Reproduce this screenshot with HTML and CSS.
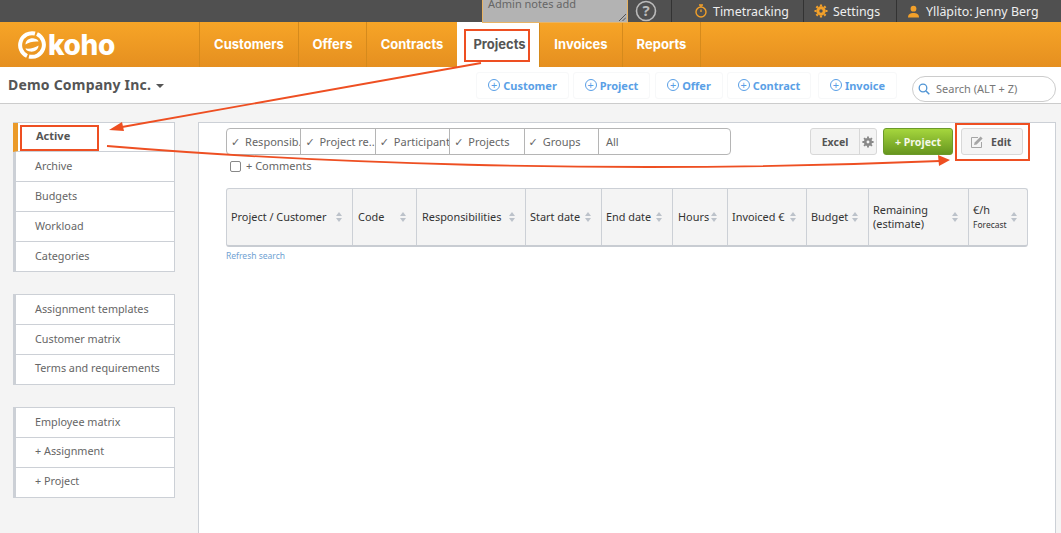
FILE: index.html
```html
<!DOCTYPE html>
<html>
    <head>
        <meta name="viewport" content="width=device-width, initial-scale=1" />
        <meta http-equiv="content-type" content="text/html; charset=utf-8" />
        <title>Koho | Projects</title>
        <link rel="stylesheet" href="styles.css">
    </head>
    <body>
        <div class="topbar">
            <div class="notes">Admin notes add<svg class="grip" width="8" height="8" viewBox="0 0 8 8"><path d="M1 8L8 1M4.500 8L8 4.500" stroke="#555" fill="none"/></svg></div>
            <div class="help"><svg width="22" height="22" viewBox="0 0 22 22"><circle cx="11" cy="11" r="9.500" fill="none" stroke="#bbb" stroke-width="1.600"/><text x="11" y="15.500" text-anchor="middle" class="help-mark">?</text></svg></div>
            <div class="top-item top-time">
                <svg width="14" height="14" viewBox="0 0 14 14"><circle cx="7" cy="8" r="5" fill="none" stroke="#f2a02a" stroke-width="1.400"/><path d="M5 1h4M7 1v2M7 5.500V8" stroke="#f2a02a" stroke-width="1.300" fill="none"/></svg>
                Timetracking
            </div>
            <div class="top-item top-settings">
                <svg width="14" height="14" viewBox="0 0 14 14"><circle cx="7" cy="7" r="3.200" fill="none" stroke="#f2a02a" stroke-width="3"/><path d="M7 0.500v2M7 11.500v2M0.500 7h2M11.500 7h2M2.400 2.400l1.400 1.400M10.200 10.200l1.400 1.400M2.400 11.600l1.400-1.400M10.200 3.800l1.400-1.400" stroke="#f2a02a" stroke-width="2.200"/></svg>
                Settings
            </div>
            <div class="top-item top-user">
                <svg width="13" height="13" viewBox="0 0 13 13"><circle cx="6.500" cy="3.700" r="2.900" fill="#f2a02a"/><path d="M1 12.500c0-3.500 2.500-4.500 5.500-4.500s5.500 1 5.500 4.500z" fill="#f2a02a"/></svg>
                Ylläpito: Jenny Berg
            </div>
        </div>

        <div class="header">
            <div class="logo">
                <svg width="28" height="28" viewBox="0 0 28 28">
                    <path d="M17 2.500A12 12 0 0 0 9 25" fill="none" stroke="#fff" stroke-width="4"/>
                    <path d="M11 25.500A12 12 0 0 0 19 3" fill="none" stroke="#fff" stroke-width="4"/>
                    <path d="M7.500 13.500C7.500 9 12 6.800 16 7.500C19 8 20.500 9.500 20.500 10.500C16 10 11 11 7.500 13.500z" fill="#fff"/>
                    <path d="M20.500 14.500C20.500 19 16 21.200 12 20.500C9 20 7.500 18.500 7.500 17.500C12 18 17 17 20.500 14.500z" fill="#fff"/>
                </svg>
                <span>koho</span>
            </div>
            <a class="nav nav-customers">Customers</a>
            <a class="nav nav-offers">Offers</a>
            <a class="nav nav-contracts">Contracts</a>
            <a class="nav nav-projects active">Projects</a>
            <a class="nav nav-invoices">Invoices</a>
            <a class="nav nav-reports">Reports</a>
        </div>

        <div class="subbar">
            <div class="company">Demo Company Inc.<span class="caret"></span></div>
            <div class="quick">
                <a class="quick-btn q-customer"><span class="plus">+</span>Customer</a>
                <a class="quick-btn q-project"><span class="plus">+</span>Project</a>
                <a class="quick-btn q-offer"><span class="plus">+</span>Offer</a>
                <a class="quick-btn q-contract"><span class="plus">+</span>Contract</a>
                <a class="quick-btn q-invoice"><span class="plus">+</span>Invoice</a>
            </div>
            <div class="search">
                <svg width="12" height="12" viewBox="0 0 12 12"><circle cx="5" cy="5" r="3.800" fill="none" stroke="#4f94d4" stroke-width="1.300"/><path d="M8 8l3.300 3.300" stroke="#4f94d4" stroke-width="1.500"/></svg>
                Search (ALT + Z)
            </div>
        </div>

        <div class="main">
            <div class="sidebar">
                <ul class="menu">
                    <li class="current">Active</li>
                    <li>Archive</li>
                    <li>Budgets</li>
                    <li>Workload</li>
                    <li>Categories</li>
                </ul>
                <ul class="menu">
                    <li>Assignment templates</li>
                    <li>Customer matrix</li>
                    <li class="row-up">Terms and requirements</li>
                </ul>
                <ul class="menu">
                    <li>Employee matrix</li>
                    <li class="row-up">+ Assignment</li>
                    <li class="row-up">+ Project</li>
                </ul>
            </div>
            <div class="panel">
                <div class="toolbar">
                    <div class="filters">
                        <div class="seg"><span class="tick">✓</span> Responsib.</div>
                        <div class="seg"><span class="tick">✓</span> Project re..</div>
                        <div class="seg"><span class="tick">✓</span> Participant</div>
                        <div class="seg"><span class="tick">✓</span> Projects</div>
                        <div class="seg"><span class="tick">✓</span> Groups</div>
                        <div class="seg seg-all">All</div>
                    </div>
                    <div class="excel">
                        <span class="excel-label">Excel</span>
                        <span class="excel-gear"><svg width="12" height="12" viewBox="0 0 14 14"><circle cx="7" cy="7" r="3.200" fill="none" stroke="#888" stroke-width="3"/><path d="M7 0.500v2M7 11.500v2M0.500 7h2M11.500 7h2M2.400 2.400l1.400 1.400M10.200 10.200l1.400 1.400M2.400 11.600l1.400-1.400M10.200 3.800l1.400-1.400" stroke="#888" stroke-width="2.200"/></svg></span>
                    </div>
                    <div class="btn-green">+ Project</div>
                    <div class="btn-edit">
                        <svg width="12" height="12" viewBox="0 0 12 12"><path d="M10.500 6v5.500H0.500V1.500H7" fill="none" stroke="#a5a5a5" stroke-width="1"/><path d="M3 9l.6-2.600L9.600 0.500l2 2-6 6z" fill="#a5a5a5"/></svg>
                        Edit
                    </div>
                </div>
                <label class="comments"><span class="check"></span>+ Comments</label>
                <table class="grid">
                    <tr>
                        <th class="c1">Project / Customer<span class="sort"></span></th>
                        <th class="c2">Code<span class="sort"></span></th>
                        <th class="c3">Responsibilities<span class="sort"></span></th>
                        <th class="c4">Start date<span class="sort"></span></th>
                        <th class="c5">End date<span class="sort"></span></th>
                        <th class="c6">Hours<span class="sort"></span></th>
                        <th class="c7">Invoiced €<span class="sort"></span></th>
                        <th class="c8">Budget<span class="sort"></span></th>
                        <th class="c9">Remaining<br>(estimate)<span class="sort"></span></th>
                        <th class="c10">€/h<br><small>Forecast</small><span class="sort"></span></th>
                    </tr>
                </table>
                <a class="refresh">Refresh search</a>
            </div>
        </div>

        <!-- annotations drawn over the screenshot -->
        <div class="mark mark-projects"></div>
        <div class="mark mark-active"></div>
        <div class="mark mark-edit"></div>
        <svg class="arrows" width="1061" height="533" viewBox="0 0 1061 533">
            <path d="M481 63L122 127" stroke="#ee4f22" stroke-width="1.800" fill="none"/>
            <path d="M109 130L122 122L124 131z" fill="#ee4f22"/>
            <path d="M107 146C300 162 600 175 940 161" stroke="#ee4f22" stroke-width="1.800" fill="none"/>
            <path d="M950 160L938 155L939 166z" fill="#ee4f22"/>
        </svg>
    </body>
</html>
```

FILE: styles.css
```css
*{
    box-sizing: border-box;
    padding: 0;
    margin: 0;
}
html, body{
    height: 533px;
    overflow: hidden;
}
body{
    background: #f4f4f4;
    color: #555;
    font-family: "Noto Sans", "Open Sans", sans-serif;
    font-size: 11px;
    position: relative;
}
svg{
    display: block;
    flex: none;
}

/* top bar */
.topbar{
    height: 22px;
    background: #505050;
    display: flex;
    align-items: center;
    color: #eee;
    font-size: 12.400px;
    padding-left: 482px;
}
.notes{
    width: 146px;
    height: 23px;
    align-self: flex-start;
    background: #b3b3b3;
    border: 1px solid #e8b465;
    border-top: none;
    color: #666;
    font-size: 11px;
    line-height: 8px;
    padding-left: 5px;
    position: relative;
    z-index: 2;
}
.grip{
    position: absolute;
    right: 1px;
    bottom: 1px;
}
.help{
    width: 43px;
    padding-left: 7px;
}
.help-mark{
    font-family: "Noto Sans", sans-serif;
    font-size: 15px;
    font-weight: 700;
    fill: #bbb;
}
.top-item{
    height: 22px;
    display: flex;
    align-items: center;
    gap: 5px;
    border-left: 1px solid #333;
}
.top-time{
    width: 132px;
    padding-left: 22px;
}
.top-settings{
    width: 93px;
    padding-left: 10px;
}
.top-user{
    padding-left: 10px;
    gap: 6px;
}

/* orange header */
.header{
    height: 45px;
    background: linear-gradient(#f7a527, #e58f20);
    display: flex;
    font-family: Inter, "Noto Sans", sans-serif;
    font-size: 13px;
    font-weight: 700;
    color: #fff;
}
.logo{
    width: 199px;
    display: flex;
    align-items: center;
    gap: 2px;
    padding-left: 18px;
    font-size: 28px;
    font-weight: 800;
    letter-spacing: -0.400px;
}
.nav{
    border-left: 1px solid #d58a1c;
    line-height: 45px;
    text-align: center;
}
.nav-customers{ width: 99px; }
.nav-offers{ width: 68px; }
.nav-contracts{ width: 91px; }
.nav-projects{ width: 82px; }
.nav-invoices{ width: 83px; }
.nav-reports{
    width: 79px;
    border-right: 1px solid #d58a1c;
}
.nav.active{
    background: #fff;
    color: #555;
    border-left: 3px solid #fff;
}

/* company bar */
.subbar{
    height: 37px;
    background: #fff;
    border-bottom: 1px solid #ccc;
    display: flex;
    align-items: center;
    position: relative;
}
.company{
    width: 476px;
    padding-left: 8px;
    margin-top: -2px;
    font-size: 14px;
    font-weight: 700;
    color: #555;
    letter-spacing: 0.200px;
}
.caret{
    display: inline-block;
    margin-left: 5px;
    vertical-align: 2px;
    border-top: 4px solid #555;
    border-left: 4px solid transparent;
    border-right: 4px solid transparent;
}
.quick{
    display: flex;
    height: 27px;
    width: 436px;
}
.quick-btn{
    display: flex;
    align-items: center;
    justify-content: center;
    gap: 3px;
    border: 1px solid #f7f8f9;
    border-radius: 3px;
    font-weight: 700;
    color: #5a9fe6;
}
.q-customer{ width: 93px; margin-right: 4px; }
.q-project{ width: 77px; margin-right: 5px; }
.q-offer{ width: 68px; margin-right: 4px; }
.q-contract{ width: 84px; margin-right: 7px; }
.q-invoice{ width: 79px; }
.plus{
    width: 12px;
    height: 12px;
    border: 1px solid #5a9fe6;
    border-radius: 50%;
    font-size: 11px;
    line-height: 9px;
    text-align: center;
    font-weight: 400;
}
.search{
    width: 144px;
    height: 26px;
    margin-top: 7px;
    border: 1px solid #ccc;
    border-radius: 13px;
    display: flex;
    align-items: center;
    gap: 6px;
    padding-left: 5px;
    color: #777;
}

/* main area */
.main{
    display: flex;
    align-items: flex-start;
    padding: 18px 5px 0 13px;
}
.sidebar{
    width: 162px;
    margin-right: 23px;
}
.menu{
    list-style: none;
    background: #fff;
    border: 1px solid #ccd0d6;
    border-left: 3px solid #ccd0d6;
    margin-bottom: 22px;
}
.menu li{
    height: 30px;
    line-height: 28px;
    padding-left: 19px;
    font-size: 10.800px;
    border-bottom: 1px solid #ccd0d6;
    color: #666;
}
.menu li:last-child{
    height: 29px;
    border-bottom: none;
}
.menu li.row-up{
    line-height: 26px;
}
.menu li.current{
    height: 29px;
    line-height: 26px;
    font-weight: 700;
    font-size: 11px;
    margin-left: -3px;
    padding-left: 18px;
    border-left: 5px solid #eb9a29;
    color: #555;
}
.panel{
    width: 858px;
    height: 420px;
    background: #fff;
    border: 1px solid #ccd0d6;
    padding: 5px 0 0 27px;
}

/* toolbar */
.toolbar{
    display: flex;
    height: 27px;
}
.filters{
    display: flex;
    width: 505px;
    height: 27px;
    border: 1px solid #b5b5b5;
    border-radius: 4px;
    margin-right: 79px;
    color: #666;
}
.seg{
    width: 74.400px;
    line-height: 25px;
    padding-left: 4px;
    white-space: nowrap;
    overflow: hidden;
    border-right: 1px solid #b5b5b5;
}
.tick{
    font-family: "DejaVu Sans", sans-serif;
    margin-right: 2px;
}
.seg-all{
    flex: 1;
    padding-left: 7px;
    border-right: none;
}
.excel{
    display: flex;
    width: 67px;
    border: 1px solid #d8d8d8;
    border-radius: 3px;
    background: #f4f4f4;
    margin-right: 6px;
}
.excel-label{
    flex: 1;
    text-align: center;
    line-height: 27px;
    font-size: 10.500px;
    font-weight: 700;
    color: #555;
}
.excel-gear{
    width: 17px;
    border-left: 1px solid #d8d8d8;
    display: flex;
    align-items: center;
    justify-content: center;
}
.btn-green{
    width: 70px;
    border: 1px solid #6b9a2a;
    border-radius: 3px;
    background: linear-gradient(#a5d63d, #67961f);
    color: #f4f8e8;
    font-weight: 700;
    font-size: 10.600px;
    text-align: center;
    line-height: 27px;
    margin-right: 8px;
}
.btn-edit{
    width: 62px;
    border: 1px solid #d8d8d8;
    border-radius: 3px;
    background: #f4f4f4;
    display: flex;
    align-items: center;
    gap: 8px;
    padding: 1px 0 0 9px;
    font-size: 10.600px;
    font-weight: 700;
    color: #555;
}
.comments{
    display: flex;
    align-items: center;
    height: 12px;
    margin: 4px 0 0 4px;
    gap: 5px;
    color: #666;
}
.check{
    width: 11px;
    height: 11px;
    margin-top: 2px;
    border: 1px solid #888;
    border-radius: 2px;
}

/* table */
.grid{
    table-layout: fixed;
    border-collapse: separate;
    border-spacing: 0;
    width: 802px;
    margin-top: 17px;
    background: #f4f4f4;
    border: 1px solid #ccd0d6;
    border-bottom: 2px solid #c8ccd2;
    border-radius: 3px;
    color: #333;
}
.grid th{
    height: 56px;
    position: relative;
    padding-left: 4px;
    font-weight: 400;
    font-size: 10.900px;
    line-height: 14px;
    text-align: left;
    border-right: 1px solid #ccd0d6;
}
.grid th:last-child{
    border-right: none;
}
.grid th.c2, .grid th.c3, .grid th.c6{
    padding-left: 5px;
}
.grid small{
    font-size: 8.500px;
}
.c1{ width: 126px; }
.c2{ width: 64px; }
.c3{ width: 109px; }
.c4{ width: 76px; }
.c5{ width: 71px; }
.c6{ width: 55px; }
.c7{ width: 79px; }
.c8{ width: 62px; }
.c9{ width: 100px; }
.sort{
    position: absolute;
    right: 9px;
    top: 23px;
    width: 7px;
    height: 10px;
}
.sort::before, .sort::after{
    content: "";
    position: absolute;
    left: 0;
    border-left: 3.500px solid transparent;
    border-right: 3.500px solid transparent;
}
.sort::before{
    top: 0;
    border-bottom: 4px solid #bcc2ca;
}
.sort::after{
    bottom: 0;
    border-top: 4px solid #bcc2ca;
}
.refresh{
    display: block;
    margin-top: 3px;
    font-size: 8.500px;
    color: #6f9fd2;
}

/* annotations */
.mark{
    position: absolute;
    border: 2px solid #ee4f22;
}
.mark-projects{
    left: 464px;
    top: 29px;
    width: 66px;
    height: 33px;
}
.mark-active{
    left: 20px;
    top: 125px;
    width: 79px;
    height: 26px;
}
.mark-edit{
    left: 955px;
    top: 123px;
    width: 75px;
    height: 38px;
}
.arrows{
    position: absolute;
    left: 0;
    top: 0;
}
```
